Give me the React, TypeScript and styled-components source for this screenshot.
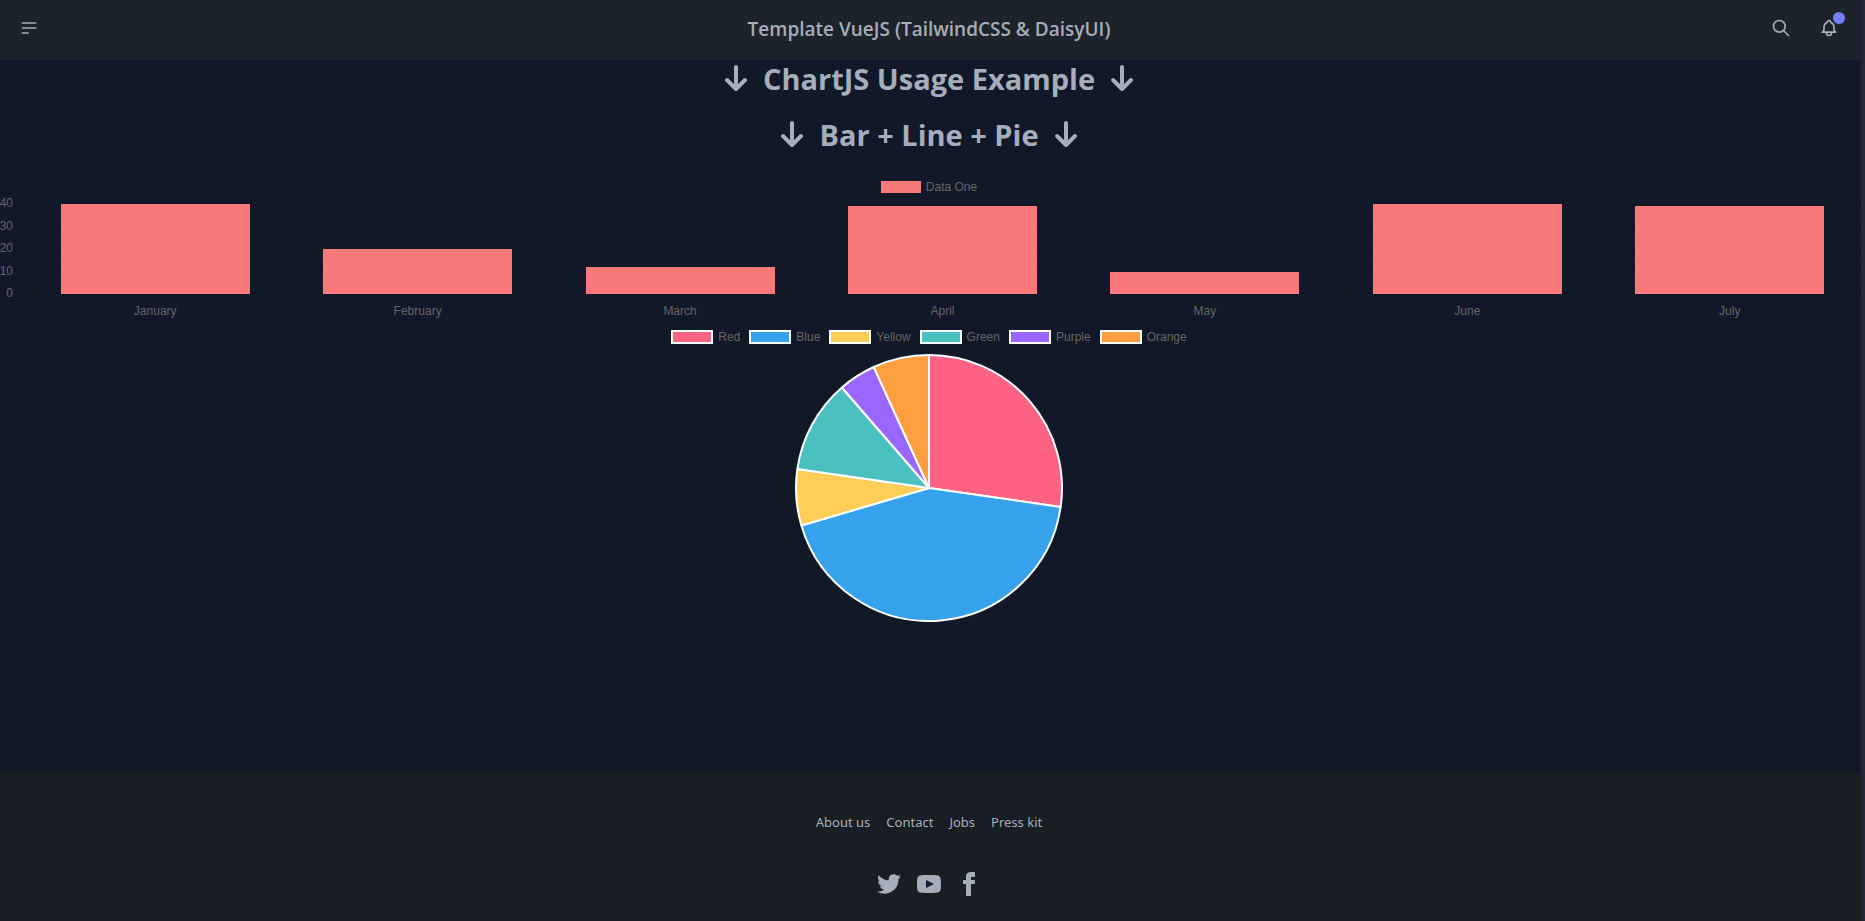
import React from "react";
import styled, { createGlobalStyle } from "styled-components";

const GlobalStyle = createGlobalStyle`
  *, *::before, *::after { box-sizing: border-box; }
  body {
    margin: 0;
    overflow: hidden;
    background: #242836;
    color: #a6adbb;
    font-family: "Open Sans", "Noto Sans", sans-serif;
  }
`;

const Page = styled.div`
  display: flex;
  flex-direction: column;
  min-height: calc(100vh + 4px);
  margin: -4px 4px 0 -3px;
  background: #111827;
`;

const Navbar = styled.header`
  display: flex;
  align-items: center;
  min-height: 64px;
  padding: 8px;
  background: #1d232a;
`;

const NavSide = styled.div<{ $end?: boolean }>`
  display: flex;
  flex: 1;
  justify-content: ${(p) => (p.$end ? "flex-end" : "flex-start")};
`;

const Brand = styled.a`
  padding-top: 2px;
  color: inherit;
  font-size: 19px;
  line-height: 28px;
  font-weight: 600;
  text-decoration: none;
`;

const IconButton = styled.button`
  position: relative;
  display: flex;
  align-items: center;
  justify-content: center;
  width: 48px;
  height: 48px;
  padding: 0;
  border: 0;
  border-radius: 50%;
  background: transparent;
  color: inherit;
`;

const Badge = styled.span`
  position: absolute;
  top: 8px;
  right: 8px;
  width: 12px;
  height: 12px;
  border-radius: 50%;
  background: #747fff;
`;

const Main = styled.main`
  display: flex;
  flex: 1;
  flex-direction: column;
  padding-top: 1px;
`;

const Heading = styled.h1`
  display: flex;
  align-items: center;
  justify-content: center;
  gap: 12px;
  margin: 0 0 20px;
  font-size: 29px;
  line-height: 36px;
  font-weight: 700;
`;

const Legend = styled.ul`
  display: flex;
  justify-content: center;
  gap: 9px;
  margin: 0;
  padding: 0;
  list-style: none;
  color: #666;
  font-family: "Liberation Sans", Arial, sans-serif;
  font-size: 12px;
  line-height: 14px;
`;

const LegendItem = styled.li`
  display: flex;
  align-items: center;
  gap: 5px;
`;

const Swatch = styled.span<{ $color: string; $outlined?: boolean }>`
  width: ${(p) => (p.$outlined ? 42 : 40)}px;
  height: ${(p) => (p.$outlined ? 14 : 12)}px;
  border: ${(p) => (p.$outlined ? "2px solid #fff" : "0")};
  background: ${(p) => p.$color};
`;

const BarFigure = styled.figure`
  margin: 0;
  padding-top: 7px;
  color: #666;
  font-family: "Liberation Sans", Arial, sans-serif;
  font-size: 12px;
  line-height: 14px;
`;

const BarBody = styled.div`
  display: grid;
  grid-template-columns: 27px 1fr;
  margin-top: 10px;
`;

const Scale = styled.div`
  display: flex;
  flex-direction: column;
  justify-content: space-between;
  height: 104px;
  margin-top: -8px;
  padding-right: 11px;
  text-align: right;
`;

const Columns = styled.div`
  display: flex;
  position: relative;
`;

const GridLines = styled.div`
  position: absolute;
  top: 0;
  right: 0;
  left: -8px;
  display: flex;
  flex-direction: column;
  justify-content: space-between;
  height: 90px;
`;

const GridLine = styled.div`
  height: 1px;
  background: rgba(0, 0, 0, 0.12);
`;

const Column = styled.div`
  display: flex;
  flex: 1;
  flex-direction: column;
`;

const BarArea = styled.div`
  position: relative;
  display: flex;
  align-items: flex-end;
  justify-content: center;
  height: 98px;
  padding-bottom: 8px;
  box-shadow: inset 1px 0 rgba(0, 0, 0, 0.12);
`;

const Bar = styled.div`
  width: 72%;
  background: #f87979;
`;

const Month = styled.div`
  padding-top: 2px;
  text-align: center;
`;

const PieFigure = styled.figure`
  display: flex;
  flex-direction: column;
  align-items: center;
  gap: 10px;
  margin: 12px 0 150px;
`;

const Footer = styled.footer`
  display: flex;
  flex-direction: column;
  align-items: center;
  gap: 40px;
  padding: 40px;
  background: #191d24;
`;

const FooterNav = styled.nav`
  display: flex;
  gap: 16px;
`;

const FooterLink = styled.a`
  display: block;
  color: inherit;
  font-family: "Noto Sans", "Open Sans", sans-serif;
  font-size: 13px;
  line-height: 20px;
  text-decoration: none;

  svg { display: block; }
`;

const bars = [
  { month: "January", value: 40 },
  { month: "February", value: 20 },
  { month: "March", value: 12 },
  { month: "April", value: 39 },
  { month: "May", value: 10 },
  { month: "June", value: 40 },
  { month: "July", value: 39 },
];

const ticks = [40, 30, 20, 10, 0];

const slices = [
  { label: "Red", value: 12, color: "#ff6384" },
  { label: "Blue", value: 19, color: "#36a2eb" },
  { label: "Yellow", value: 3, color: "#ffce56" },
  { label: "Green", value: 5, color: "#4bc0c0" },
  { label: "Purple", value: 2, color: "#9966ff" },
  { label: "Orange", value: 3, color: "#ff9f40" },
];

const ArrowDown = () => (
  <svg width="30" height="30" viewBox="0 0 30 30" fill="none" stroke="currentColor" strokeWidth="4" strokeLinecap="round" strokeLinejoin="round" aria-hidden="true">
    <path d="M15 3v22M6 16l9 9 9-9" />
  </svg>
);

const StrokeIcon = ({ d }: { d: string }) => (
  <svg width="20" height="20" viewBox="0 0 24 24" fill="none" stroke="currentColor" strokeWidth="2" strokeLinecap="round" strokeLinejoin="round" aria-hidden="true">
    <path d={d} />
  </svg>
);

const socials = [
  {
    name: "Twitter",
    d: "M24 4.557c-.883.392-1.832.656-2.828.775 1.017-.609 1.798-1.574 2.165-2.724-.951.564-2.005.974-3.127 1.195-.897-.957-2.178-1.555-3.594-1.555-3.179 0-5.515 2.966-4.797 6.045-4.091-.205-7.719-2.165-10.148-5.144-1.29 2.213-.669 5.108 1.523 6.574-.806-.026-1.566-.247-2.229-.616-.054 2.281 1.581 4.415 3.949 4.89-.693.188-1.452.232-2.224.084.626 1.956 2.444 3.379 4.6 3.419-2.07 1.623-4.678 2.348-7.29 2.04 2.179 1.397 4.768 2.212 7.548 2.212 9.142 0 14.307-7.721 13.995-14.646.962-.695 1.797-1.562 2.457-2.549z",
  },
  {
    name: "YouTube",
    d: "M19.615 3.184c-3.604-.246-11.631-.245-15.23 0-3.897.266-4.356 2.62-4.385 8.816.029 6.185.484 8.549 4.385 8.816 3.6.245 11.626.246 15.23 0 3.897-.266 4.356-2.62 4.385-8.816-.029-6.185-.484-8.549-4.385-8.816zm-10.615 12.816v-8l8 3.993-8 4.007z",
  },
  {
    name: "Facebook",
    d: "M9 8h-3v4h3v12h5v-12h3.642l.358-4h-4v-1.667c0-.955.192-1.333 1.115-1.333h2.885v-5h-3.808c-3.596 0-5.192 1.583-5.192 4.615v3.385z",
  },
];

function PieChart() {
  const total = slices.reduce((sum, s) => sum + s.value, 0);
  const c = 134;
  const r = 133;
  let start = 0;
  return (
    <svg width="268" height="268" viewBox="0 0 268 268" role="img" aria-label="Pie chart of colours">
      {slices.map((s) => {
        const end = start + (s.value / total) * Math.PI * 2;
        const point = (a: number) => `${c + r * Math.sin(a)} ${c - r * Math.cos(a)}`;
        const large = end - start > Math.PI ? 1 : 0;
        const d = `M${c} ${c}L${point(start)}A${r} ${r} 0 ${large} 1 ${point(end)}Z`;
        start = end;
        return <path key={s.label} d={d} fill={s.color} stroke="#fff" strokeWidth="2" strokeLinejoin="bevel" />;
      })}
    </svg>
  );
}

export default function App() {
  return (
    <>
      <GlobalStyle />
      <Page>
        <Navbar>
          <NavSide>
            <IconButton aria-label="Menu">
              <StrokeIcon d="M4 6h16M4 12h16M4 18h7" />
            </IconButton>
          </NavSide>
          <Brand href="#">Template VueJS (TailwindCSS &amp; DaisyUI)</Brand>
          <NavSide $end>
            <IconButton aria-label="Search">
              <StrokeIcon d="M21 21l-6-6m2-5a7 7 0 11-14 0 7 7 0 0114 0z" />
            </IconButton>
            <IconButton aria-label="Notifications">
              <StrokeIcon d="M15 17h5l-1.405-1.405A2.032 2.032 0 0118 14.158V11a6.002 6.002 0 00-4-5.659V5a2 2 0 10-4 0v.341C7.67 6.165 6 8.388 6 11v3.159c0 .538-.214 1.055-.595 1.436L4 17h5m6 0v1a3 3 0 11-6 0v-1m6 0H9" />
              <Badge />
            </IconButton>
          </NavSide>
        </Navbar>

        <Main>
          <Heading><ArrowDown />ChartJS Usage Example<ArrowDown /></Heading>
          <Heading><ArrowDown />Bar + Line + Pie<ArrowDown /></Heading>

          <BarFigure>
            <Legend>
              <LegendItem><Swatch $color="#f87979" />Data One</LegendItem>
            </Legend>
            <BarBody>
              <Scale>
                {ticks.map((tick) => <span key={tick}>{tick}</span>)}
              </Scale>
              <Columns>
                <GridLines>
                  {ticks.map((tick) => <GridLine key={tick} />)}
                </GridLines>
                {bars.map((b) => (
                  <Column key={b.month}>
                    <BarArea>
                      <Bar style={{ height: `${(b.value / 40) * 100}%` }} />
                    </BarArea>
                    <Month>{b.month}</Month>
                  </Column>
                ))}
              </Columns>
            </BarBody>
          </BarFigure>

          <PieFigure>
            <Legend>
              {slices.map((s) => (
                <LegendItem key={s.label}><Swatch $color={s.color} $outlined />{s.label}</LegendItem>
              ))}
            </Legend>
            <PieChart />
          </PieFigure>
        </Main>

        <Footer>
          <FooterNav aria-label="Company">
            <FooterLink href="#">About us</FooterLink>
            <FooterLink href="#">Contact</FooterLink>
            <FooterLink href="#">Jobs</FooterLink>
            <FooterLink href="#">Press kit</FooterLink>
          </FooterNav>
          <FooterNav aria-label="Social">
            {socials.map((s) => (
              <FooterLink key={s.name} href="#" aria-label={s.name}>
                <svg width="24" height="24" viewBox="0 0 24 24" fill="currentColor" aria-hidden="true">
                  <path d={s.d} />
                </svg>
              </FooterLink>
            ))}
          </FooterNav>
        </Footer>
      </Page>
    </>
  );
}
